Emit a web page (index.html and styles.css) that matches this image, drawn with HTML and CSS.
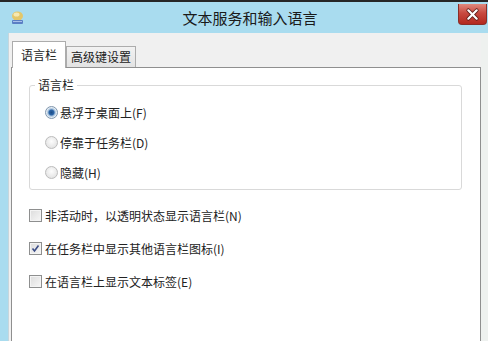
FILE: index.html
```html
<!DOCTYPE html>
<html lang="zh-CN">

<head>
  <meta charset="UTF-8">
  <meta name="viewport" content="width=device-width, initial-scale=1.0">
  <title>文本服务和输入语言</title>
  <link rel="stylesheet" href="styles.css">
</head>

<body>

  <div class="window">
    <div class="titlebar">
      <svg class="app-icon" width="15" height="15" viewBox="0 0 15 15">
        <ellipse cx="7.5" cy="6" rx="5.5" ry="4.5" fill="#e3c76a" />
        <ellipse cx="6.5" cy="4.5" rx="3" ry="2" fill="#f6e8b0" />
        <rect x="2" y="10" width="11" height="4" rx="1" fill="#5b7fc4" />
        <rect x="3" y="11" width="9" height="1" fill="#a9c0ea" />
      </svg>
      <div class="title">文本服务和输入语言</div>
      <div class="close">
        <svg width="29" height="21" viewBox="0 0 29 21">
          <path d="M10 6 L19 15 M19 6 L10 15" stroke="#5a1a16" stroke-width="4" stroke-linecap="round" />
          <path d="M10 6 L19 15 M19 6 L10 15" stroke="#fff" stroke-width="2.4" stroke-linecap="round" />
        </svg>
      </div>
    </div>

    <div class="frame">
      <div class="client">
        <div class="tabs">
          <div class="tab active">语言栏</div>
          <div class="tab">高级键设置</div>
        </div>

        <div class="panel">
          <fieldset class="group">
            <legend>语言栏</legend>
            <div class="options">
              <label class="opt"><span class="radio checked"></span>悬浮于桌面上(F)</label>
              <label class="opt"><span class="radio"></span>停靠于任务栏(D)</label>
              <label class="opt"><span class="radio"></span>隐藏(H)</label>
            </div>
          </fieldset>

          <div class="checks">
            <label class="opt"><span class="check"></span>非活动时，以透明状态显示语言栏(N)</label>
            <label class="opt">
              <span class="check">
                <svg width="11" height="11" viewBox="0 0 11 11">
                  <path d="M2.5 5.5 L4.5 8 L8.5 2.5" stroke="#3b4c86" stroke-width="1.6" fill="none" />
                </svg>
              </span>在任务栏中显示其他语言栏图标(I)
            </label>
            <label class="opt"><span class="check"></span>在语言栏上显示文本标签(E)</label>
          </div>
        </div>
      </div>
      <div class="frame-right"></div>
    </div>
  </div>

</body>

</html>
```

FILE: styles.css
```css
body {
  margin: 0;
  font-family: "Noto Sans CJK SC", "Microsoft YaHei", sans-serif;
  color: #222;
  background: #eef1ef;
}

.window {
  width: 488px;
  height: 341px;
  display: flex;
  flex-direction: column;
  box-sizing: border-box;
  border-top: 2px solid #262626;
  background: #a9dcef;
  overflow: hidden;
}

/* title bar */
.titlebar {
  height: 31px;
  display: flex;
  align-items: center;
  flex-shrink: 0;
}

.app-icon {
  margin-left: 10px;
  flex-shrink: 0;
}

.title {
  flex: 1;
  text-align: center;
  padding-left: 17px;
  font-size: 15px;
  line-height: 20px;
  color: #1a1a1a;
}

.close {
  align-self: flex-start;
  margin-top: 2px;
  margin-right: 1px;
  width: 29px;
  height: 21px;
  box-sizing: border-box;
  border: 1px solid #8a2e28;
  border-top: none;
  border-radius: 0 0 4px 4px;
  background: linear-gradient(#e0897d, #c84a40 45%, #b3291f);
  display: flex;
  align-items: center;
  justify-content: center;
}

.close svg {
  display: block;
}

/* body of the dialog */
.frame {
  flex: 1;
  display: flex;
  padding-left: 8px;
}

.client {
  flex: 1;
  border-left: 1px solid #c6d6dc;
  background: #f0f0f0;
  padding: 8px 0 0 2px;
  display: flex;
  flex-direction: column;
}

.frame-right {
  width: 7px;
  background: #eef1ef;
}

.tabs {
  display: flex;
  align-items: flex-end;
  padding-left: 1px;
  position: relative;
  z-index: 1;
}

.tab {
  height: 21px;
  box-sizing: border-box;
  padding: 0 4px;
  border: 1px solid #acacac;
  border-bottom: none;
  background: linear-gradient(#f2f2f2, #e3e3e3);
  font-size: 12px;
  line-height: 20px;
  margin-bottom: 0;
}

.tab.active {
  height: 27px;
  padding: 0 8px;
  margin-bottom: -1px;
  background: #fff;
  line-height: 25px;
}

.panel {
  flex: 1;
  background: #fff;
  border: 1px solid #8f8f8f;
  border-bottom: none;
  padding: 9px 18px 0 17px;
}

.group {
  margin: 0;
  border: 1px solid #d9d9d9;
  border-radius: 3px;
  padding: 9px 10px 7px 5px;
}

.group legend {
  padding: 0 3px;
  font-size: 12px;
  line-height: 16px;
}

.options {
  display: flex;
  flex-direction: column;
  gap: 10px;
  padding-left: 10px;
}

.checks {
  display: flex;
  flex-direction: column;
  gap: 13px;
  margin-top: 15px;
}

.opt {
  display: flex;
  align-items: center;
  height: 20px;
  font-size: 12px;
  color: #222;
}

.radio {
  width: 13px;
  height: 13px;
  box-sizing: border-box;
  border-radius: 50%;
  border: 1px solid #bcbcbc;
  background: radial-gradient(circle at 50% 40%, #fdfdfd, #dcdcdc);
  margin-right: 2px;
}

.radio.checked {
  border-color: #8096ad;
  background: radial-gradient(circle at 50% 50%, #1d4d87 0, #2d66a8 2.5px, #9dbbd9 3.5px, #e4ecf3 5px);
}

.check {
  width: 13px;
  height: 13px;
  box-sizing: border-box;
  border: 1px solid #8e8f8f;
  background: linear-gradient(135deg, #dcdcdc, #f7f7f7);
  box-shadow: inset 0 0 0 1px #f4f4f4;
  margin-right: 3px;
  display: flex;
  align-items: center;
  justify-content: center;
}

.check svg {
  display: block;
}
```
